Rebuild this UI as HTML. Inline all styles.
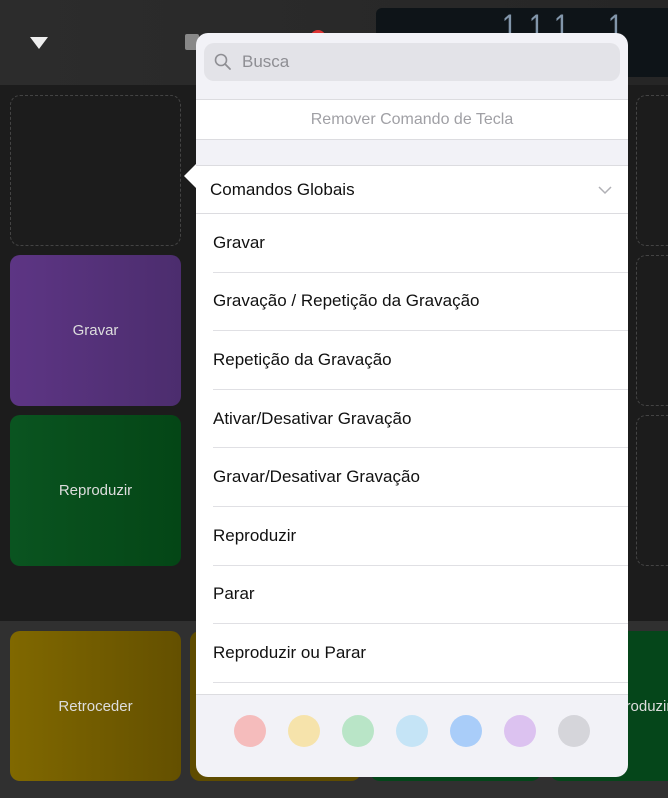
<!DOCTYPE html>
<html><head><meta charset="utf-8"><style>
*{margin:0;padding:0;box-sizing:border-box}
body{width:668px;height:798px;overflow:hidden;background:#1c1c1c;font-family:"Liberation Sans",sans-serif;position:relative}
.abs{position:absolute}
.pad{position:absolute;border-radius:10px;color:#ddd;font-size:15px;display:flex;align-items:center;justify-content:center}
.dash{border:1px dashed #444;border-radius:10px;position:absolute}
.row{position:absolute;left:17px;right:0;height:58.6px;border-bottom:1px solid #e0e0e4;font-size:17px;color:#111;display:flex;align-items:center}
.c{position:absolute;top:715px;width:32px;height:32px;border-radius:50%}
.d{position:absolute;top:8px;color:#8296aa;font-size:34px;font-weight:100;transform:scaleX(0.8)}
</style></head><body>
<div class="abs" style="left:0;top:0;width:668px;height:85px;background:linear-gradient(90deg,#2c2c2c,#262626)"></div>
<div class="abs" style="left:30px;top:37px;width:0;height:0;border-left:9px solid transparent;border-right:9px solid transparent;border-top:12px solid #eee"></div>
<div class="abs" style="left:185px;top:34px;width:14px;height:16px;background:#888;border-radius:2px"></div>
<div class="abs" style="left:310px;top:30px;width:16px;height:16px;background:#d33;border-radius:50%"></div>
<div class="abs" style="left:376px;top:8px;width:292px;height:69px;background:#0e1418;border-radius:6px 0 0 6px"></div>
<div class="d" style="left:500px">1</div>
<div class="d" style="left:527px">1</div>
<div class="d" style="left:552px">1</div>
<div class="d" style="left:606px">1</div>
<div class="dash" style="left:10px;top:95px;width:171px;height:151px"></div>
<div class="dash" style="left:636px;top:95px;width:60px;height:151px"></div>
<div class="dash" style="left:636px;top:255px;width:60px;height:151px"></div>
<div class="dash" style="left:636px;top:415px;width:60px;height:151px"></div>
<div class="pad" style="left:10px;top:255px;width:171px;height:151px;background:linear-gradient(90deg,#5d3584,#4c2d6e)">Gravar</div>
<div class="pad" style="left:10px;top:415px;width:171px;height:151px;background:linear-gradient(90deg,#0a5420,#044616)">Reproduzir</div>
<div class="abs" style="left:0;top:621px;width:668px;height:177px;background:#303030"></div>
<div class="pad" style="left:10px;top:631px;width:171px;height:150px;background:linear-gradient(90deg,#806800,#645000)">Retroceder</div>
<div class="pad" style="left:190px;top:631px;width:171px;height:150px;background:#5f4c00"></div>
<div class="pad" style="left:370px;top:631px;width:171px;height:150px;background:#04461a"></div>
<div class="pad" style="left:550px;top:631px;width:171px;height:150px;background:#05461a;justify-content:flex-start;padding-left:48px">Reproduzir</div>
<div class="abs" style="left:184px;top:163px;width:0;height:0;border-top:13px solid transparent;border-bottom:13px solid transparent;border-right:13px solid #fff"></div>
<div class="abs" style="left:196px;top:33px;width:432px;height:744px;background:#f2f2f7;border-radius:12px;overflow:hidden;z-index:5">
 <div class="abs" style="left:8px;top:10px;width:416px;height:38px;background:#e3e3e8;border-radius:10px;color:#8e8e93;font-size:17px;padding-left:38px;line-height:38px">Busca
  <svg class="abs" style="left:10px;top:10px" width="18" height="18" viewBox="0 0 18 18"><circle cx="7" cy="7" r="5.5" fill="none" stroke="#8e8e93" stroke-width="1.6"/><path d="M11 11l5 5" stroke="#8e8e93" stroke-width="1.8" stroke-linecap="round"/></svg></div>
 <div class="abs" style="left:0;top:66px;width:432px;height:41px;background:#fff;border-top:1px solid #dcdce0;border-bottom:1px solid #dcdce0;color:#a0a0a5;font-size:16px;text-align:center;line-height:40px">Remover Comando de Tecla</div>
 <div class="abs" style="left:0;top:132px;width:432px;height:529px;background:#fff;border-top:1px solid #dcdce0">
  <div class="abs" style="left:0;top:0;width:432px;height:48px;border-bottom:1px solid #dcdce0;font-size:17px;color:#111;padding-left:14px;line-height:48px">Comandos Globais
   <svg class="abs" style="left:402px;top:20px" width="14" height="9" viewBox="0 0 14 9"><path d="M1 1l6 6 6-6" fill="none" stroke="#b0b0b5" stroke-width="1.5"/></svg></div>
  <div class="row" style="top:48px">Gravar</div>
  <div class="row" style="top:106.6px">Gravação / Repetição da Gravação</div>
  <div class="row" style="top:165.2px">Repetição da Gravação</div>
  <div class="row" style="top:223.8px">Ativar/Desativar Gravação</div>
  <div class="row" style="top:282.4px">Gravar/Desativar Gravação</div>
  <div class="row" style="top:341px">Reproduzir</div>
  <div class="row" style="top:399.6px">Parar</div>
  <div class="row" style="top:458.2px">Reproduzir ou Parar</div>
 </div>
 <div class="abs" style="left:0;top:661px;width:432px;height:1px;background:#dcdce0"></div>
</div>
<div style="position:absolute;z-index:6">
<div class="c" style="left:234px;background:#f5bcbc"></div>
<div class="c" style="left:288px;background:#f6e3ab"></div>
<div class="c" style="left:342px;background:#b9e5c7"></div>
<div class="c" style="left:396px;background:#c5e4f6"></div>
<div class="c" style="left:450px;background:#a9cdf9"></div>
<div class="c" style="left:504px;background:#dcc2f0"></div>
<div class="c" style="left:558px;background:#d5d5da"></div>
</div>
</body></html>
